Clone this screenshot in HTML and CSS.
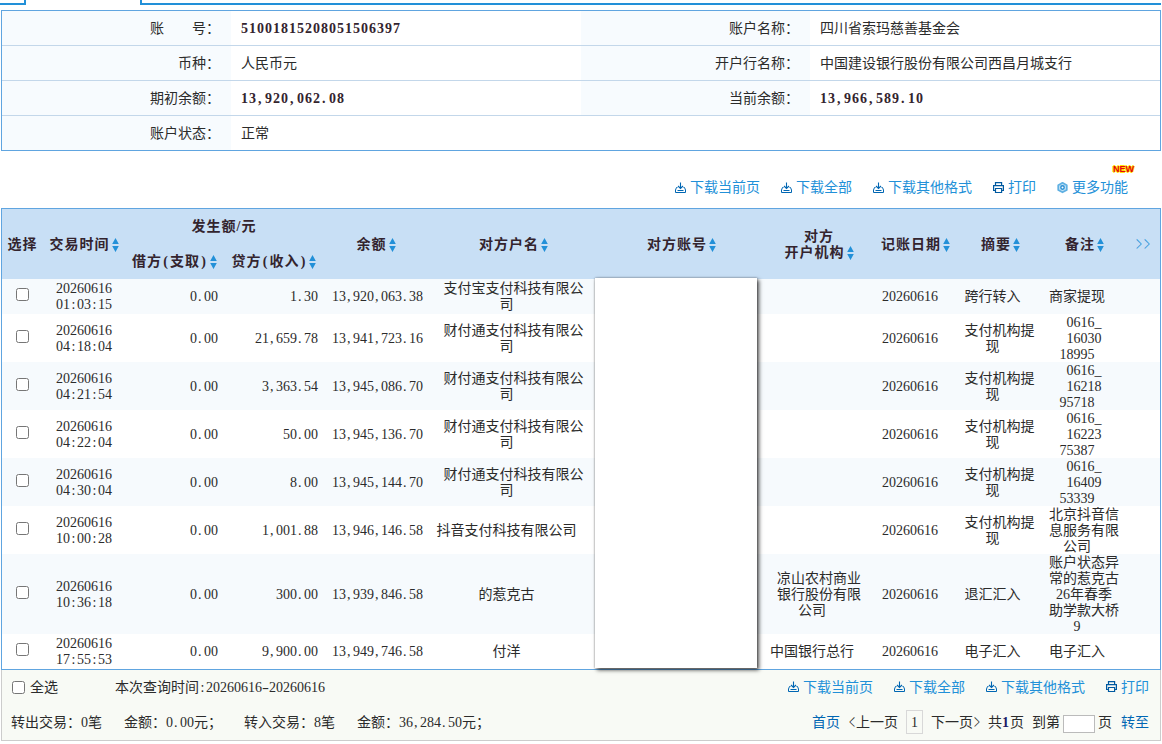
FILE: index.html
```html
<!DOCTYPE html>
<html lang="zh-CN">
<head>
<meta charset="utf-8">
<title>账户明细</title>
<link rel="stylesheet" href="styles.css">
</head>
<body>
<svg class="defs" width="0" height="0">
  <symbol id="dl" viewBox="0 0 12 12"><path d="M5.5 0.5V6.5M3 4L5.5 6.5L8 4" fill="none" stroke="#0066b3" stroke-width="1.1"/><path d="M2.5 5.5H1.5L.5 8V10.5H10.5V8L9.5 5.5H8.5M2.5 8.5H8.5" fill="none" stroke="#0066b3"/></symbol>
  <symbol id="pr" viewBox="0 0 12 12"><path d="M2.5 3.5V.6H8.6V3.5M2.5 8.5H.6V3.6H10.4V8.5H8.6M2.5 6.5H8.6V10.5H2.5Z" fill="none" stroke="#0059a0" stroke-width="1.2"/></symbol>
  <symbol id="gear" viewBox="0 0 12 12"><path d="M5.5 .8L9.8 3.2V7.9L5.5 10.3L1.2 7.9V3.2Z" fill="#bfe0f5" stroke="#5fb0e2" stroke-width="1.7" stroke-linejoin="round"/><circle cx="5.5" cy="5.5" r="1.7" fill="#fff" stroke="#2a8fd4" stroke-width="1.4"/></symbol>
  <symbol id="sort" viewBox="0 0 7 14"><path d="M3.5 0L6.8 6H.2ZM3.5 14L6.8 8H.2Z" fill="#2290d8"/></symbol>
</svg>
<div class="tabs"><div class="tab-left"></div><div class="tab-right"></div></div>
<section class="info">
  <div class="irow"><div class="lab">账　　号：</div><div class="val strong num">51001815208051506397</div><div class="lab">账户名称：</div><div class="val">四川省索玛慈善基金会</div></div>
  <div class="irow"><div class="lab">币种：</div><div class="val">人民币元</div><div class="lab">开户行名称：</div><div class="val">中国建设银行股份有限公司西昌月城支行</div></div>
  <div class="irow"><div class="lab">期初余额：</div><div class="val strong num">13,920,062.08</div><div class="lab">当前余额：</div><div class="val strong num">13,966,589.10</div></div>
  <div class="irow"><div class="lab">账户状态：</div><div class="val">正常</div></div>
</section>
<div class="tools">
  <a><svg><use href="#dl"/></svg><span>下载当前页</span></a><a><svg><use href="#dl"/></svg><span>下载全部</span></a><a><svg><use href="#dl"/></svg><span>下载其他格式</span></a><a><svg><use href="#pr"/></svg><span>打印</span></a><a class="more"><svg><use href="#gear"/></svg><span>更多功能</span><b class="new">NEW</b></a>
</div>
<section class="grid">
  <div class="row head">
    <div>选择</div>
    <div>交易时间<svg><use href="#sort"/></svg></div>
    <div class="amount">
      <div class="num group">发生额/元</div>
      <div class="pair"><div><span class="num">借方(支取)</span><svg><use href="#sort"/></svg></div><div><span class="num">贷方(收入)</span><svg><use href="#sort"/></svg></div></div>
    </div>
    <div>余额<svg><use href="#sort"/></svg></div>
    <div class="h-name">对方户名<svg><use href="#sort"/></svg></div>
    <div class="h-acct">对方账号<svg><use href="#sort"/></svg></div>
    <div class="h-org"><div>对方</div><div class="line">开户机构<svg><use href="#sort"/></svg></div></div>
    <div class="h-date">记账日期<svg><use href="#sort"/></svg></div>
    <div class="h-sum">摘要<svg><use href="#sort"/></svg></div>
    <div class="h-note">备注<svg><use href="#sort"/></svg></div>
    <div class="next"><span class="angle">&gt;</span><span class="angle">&gt;</span></div>
  </div>
  <div id="rows"></div>
  <div class="cover"></div>
</section>
<footer class="foot">
  <div class="frow">
    <label class="all"><input type="checkbox">全选</label>
    <span class="num">本次查询时间:20260616-20260616</span>
    <div class="tools small"><a><svg><use href="#dl"/></svg><span>下载当前页</span></a><a><svg><use href="#dl"/></svg><span>下载全部</span></a><a><svg><use href="#dl"/></svg><span>下载其他格式</span></a><a><svg><use href="#pr"/></svg><span>打印</span></a></div>
  </div>
  <div class="frow">
    <span class="t1 num">转出交易：0笔</span><span class="t2 num">金额：0.00元；</span><span class="t1 num">转入交易：8笔</span><span class="num">金额：36,284.50元；</span>
    <div class="pager"><a class="first">首页</a><span class="prev"><span class="angle">&lt;</span>上一页</span><span class="cur">1</span><span class="nextp">下一页<span class="angle">&gt;</span></span><span class="total">共<b>1</b>页</span><span>到第</span><input class="goto" type="text"><span>页</span><a class="go">转至</a></div>
  </div>
</footer>
<script src="app.js"></script>
</body>
</html>
```

FILE: styles.css
```css
* { box-sizing: border-box; }
body {
  margin: 0;
  width: 1162px;
  height: 744px;
  overflow: hidden;
  background: #fff;
  color: #2b2b2b;
  font: 14px/16px "Liberation Serif", "Noto Sans CJK SC", serif;
  white-space: nowrap;
}
.defs { position: absolute; }
.tabs { display: flex; justify-content: space-between; height: 5px; margin-bottom: 5px; padding-right: 1px; }
.tab-left { width: 26px; border: solid #2290d8; border-width: 0 2px 2px 0; }
.tab-right { width: 1021px; border: solid #2290d8; border-width: 0 0 2px 2px; }

.info { width: 1160px; margin-left: 1px; border: 1px solid #60a5e0; }
.irow { display: grid; grid-template-columns: 229px 350px 229px 350px; height: 35px; border-bottom: 1px solid #c3d7ea; line-height: 32px; }
.irow > div { padding-top: 2px; }
.irow:last-child { height: 34px; border-bottom: 0; }
.lab { background: #f7fbfe; text-align: right; padding-right: 11px; }
.val { padding-left: 10px; }
.strong { font-weight: bold; letter-spacing: 1px; color: #33242e; }

.tools { display: flex; justify-content: flex-end; gap: 20px; height: 57px; padding: 22px 33px 0 0; color: #2290d8; }
.tools a { display: flex; align-items: center; height: 30px; }
.tools svg { width: 12px; height: 12px; margin: -1px 3px 0 0; }
.tools a > span { margin-right: 1px; }
.more { position: relative; }
.new {
  position: absolute; right: -5px; top: -9px;
  font: bold 9px/11px "Liberation Sans", sans-serif;
  color: #e60012;
  text-shadow: 1px 0 #ffe000, -1px 0 #ffe000, 0 1px #ffe000, 0 -1px #ffe000;
}
.grid { position: relative; width: 1160px; margin-left: 1px; border: 1px solid #60a5e0; }
.row { display: grid; grid-template-columns: 41px 82px 99px 100px 104px 158px 177px 98px 89px 85px 84px 41px; align-items: center; text-align: center; background: #fff; }
.row:nth-child(odd) { background: #f6fafd; }
.row.head { grid-template-columns: 41px 82px 199px 104px 158px 177px 98px 89px 85px 84px 41px; height: 70px; background: #c8dff5; font-weight: bold; letter-spacing: 1px; color: #33242e; }
.head > div { padding-top: 1px; }
.head > .amount { padding-top: 0; }
.head svg { width: 7px; height: 14px; margin-left: 2px; vertical-align: -3px; }
.group { padding-right: 1px; }
.pair { display: grid; grid-template-columns: 99px 100px; }
.amount { line-height: 35px; }
.h-name { padding-left: 13px; }
.h-acct { padding-left: 14px; }
.h-org { padding-left: 14px; }
.line { height: 16px; }
.h-date { padding-left: 20px; }
.h-sum { padding-left: 16px; }
.h-note { padding-left: 15px; }
.next { color: #2290d8; font-weight: normal; letter-spacing: 0; padding-left: 7px; }
.angle { display: inline-block; width: 8px; text-align: center; transform: scale(.75, 1.45); }
.row input, .all input { display: block; width: 13px; height: 13px; margin: 0; }
.row .check { padding: 0 0 4px 14px; }
.tall > div { padding-top: 1px; }
.tall .check { padding-bottom: 5px; }
.debit, .credit { text-align: right; padding-right: 6px; }
.bal { text-align: right; padding-right: 5px; }
.name { padding-right: 1px; }
.date { padding-left: 9px; }
.shift { padding-left: 14px; }
.low { padding-left: 1px; letter-spacing: 2.5px; }
.strong .low { letter-spacing: 3.5px; }
.mid { padding: 0 1.55px; }
.par { padding: 0 1.17px; }
.dash { display: inline-block; width: 7px; transform: scaleX(1.5); text-align: center; }
.cover { position: absolute; left: 593px; top: 69px; width: 162px; height: 390px; background: #fff; box-shadow: 2px 2px 4px rgba(0,0,0,.7), 0 0 2px rgba(0,0,0,.4); }

.foot { width: 1160px; height: 71px; margin-left: 1px; background: #f8faf5; border: 1px solid #ccc; border-top: 0; }
.frow { display: flex; align-items: center; height: 35px; padding: 0 10px 0 9px; }
.all { display: flex; align-items: center; gap: 5px; width: 104px; padding-left: 1px; }
.tools.small { height: 30px; padding: 0; margin-left: auto; }
.t1 { width: 113px; }
.t2 { width: 120px; }
.pager { display: flex; align-items: center; margin-left: auto; }
.pager a { color: #0066b3; }
.prev { margin-left: 8px; }
.cur { width: 17px; height: 24px; margin: -2px 8px 0 8px; border: 1px solid #d8d8d8; line-height: 24px; text-align: center; }
.nextp { margin-right: 7px; }
.total { margin-right: 8px; }
.total b { color: #1b1b66; margin-right: 1px; }
.goto { width: 32px; height: 18px; margin: 3px 3px 0; padding: 0; border: 1px solid #bbb; background: #fff; }
.go { margin: 0 1px 0 9px; }
```

FILE: app.js
```javascript
const data = [
  [35, '01:03:15', '1.30', '13,920,063.38', '支付宝支付科技有限公|司', '', '跨行转入', '商家提现'],
  [48, '04:18:04', '21,659.78', '13,941,723.16', '财付通支付科技有限公|司', '', '支付机构提|现', '0616_|16030|18995'],
  [48, '04:21:54', '3,363.54', '13,945,086.70', '财付通支付科技有限公|司', '', '支付机构提|现', '0616_|16218|95718'],
  [48, '04:22:04', '50.00', '13,945,136.70', '财付通支付科技有限公|司', '', '支付机构提|现', '0616_|16223|75387'],
  [48, '04:30:04', '8.00', '13,945,144.70', '财付通支付科技有限公|司', '', '支付机构提|现', '0616_|16409|53339'],
  [48, '10:00:28', '1,001.88', '13,946,146.58', '抖音支付科技有限公司', '', '支付机构提|现', '北京抖音信|息服务有限|公司'],
  [80, '10:36:18', '300.00', '13,939,846.58', '的惹克古', '凉山农村商业|银行股份有限|公司', '退汇汇入', '账户状态异|常的惹克古|26年春季|助学款大桥|9'],
  [35, '17:55:53', '9,900.00', '13,949,746.58', '付洋', '中国银行总行', '电子汇入', '电子汇入']
];
const lines = t => t.split('|').map((s, i, a) =>
  `<div class="${i < a.length - 1 ? 'shift' : ''}">${s}</div>`).join('');

document.getElementById('rows').innerHTML = data.map(r => `
  <div class="row ${r[0] > 40 ? 'tall' : ''}" style="height:${r[0]}px;grid-template-rows:${r[0] > 40 ? r[0] + 1 : r[0]}px">
    <div class="check"><input type="checkbox"></div>
    <div><div>20260616</div><div class="num">${r[1]}</div></div>
    <div class="debit num">0.00</div>
    <div class="credit num">${r[2]}</div>
    <div class="bal num">${r[3]}</div>
    <div class="name">${lines(r[4])}</div>
    <div></div>
    <div>${lines(r[5])}</div>
    <div class="date">20260616</div>
    <div>${lines(r[6])}</div>
    <div>${lines(r[7])}</div>
    <div></div>
  </div>`).join('');

// Give half-width punctuation the same advance as the digits.
document.querySelectorAll('.num').forEach(el => {
  el.innerHTML = el.textContent
    .replace(/-/g, '<i>')
    .replace(/[,.]/g, '<span class="low">$&</span>')
    .replace(/[:]/g, '<span class="mid">:</span>')
    .replace(/[()]/g, '<span class="par">$&</span>')
    .replace(/<i>/g, '<span class="dash">-</span>');
});
```
